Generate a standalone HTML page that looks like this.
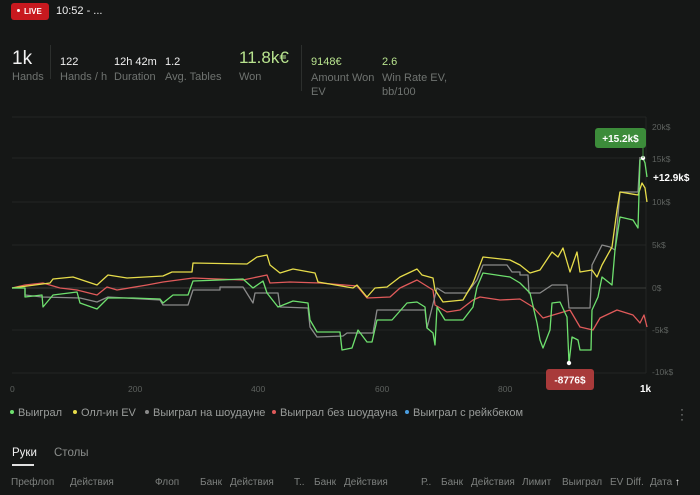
<!DOCTYPE html>
<html><head><meta charset="utf-8"><style>
*{margin:0;padding:0;box-sizing:border-box}
body{width:700px;height:495px;background:#151716;color:#e8e8e8;font-family:"Liberation Sans",sans-serif;position:relative;overflow:hidden}
.a{position:absolute;white-space:nowrap}
.v{font-size:11px;color:#f0f0f0}
.l{font-size:11px;color:#6f7370}
.g{color:#b8e38e}
.lg{font-size:11px;color:#9a9d9b}
.dot{display:inline-block;width:4px;height:4px;border-radius:50%;margin-right:4px;vertical-align:middle;position:relative;top:-1px}
.th{font-size:10px;color:#7d807e;top:477px}
</style></head><body>
<div class="a" style="left:11px;top:3px;width:38px;height:17px;background:#c8191f;border-radius:3px;font-size:8px;font-weight:bold;color:#fff;line-height:17px;padding-left:6px"><span style="display:inline-block;width:3px;height:3px;background:#fff;border-radius:50%;vertical-align:middle;margin-right:4px;position:relative;top:-1px"></span>LIVE</div>
<div class="a" style="left:56px;top:5px;font-size:11px;color:#f0f0f0">10:52 - ...</div>

<div class="a" style="left:12px;top:48px;font-size:19px;color:#f2f2f2">1k</div>
<div class="a l" style="left:12px;top:71px">Hands</div>
<div class="a" style="left:50px;top:45px;width:1px;height:34px;background:#2c2f2d"></div>
<div class="a v" style="left:60px;top:56px">122</div><div class="a l" style="left:60px;top:71px">Hands / h</div>
<div class="a v" style="left:114px;top:56px">12h 42m</div><div class="a l" style="left:114px;top:71px">Duration</div>
<div class="a v" style="left:165px;top:56px">1.2</div><div class="a l" style="left:165px;top:71px">Avg. Tables</div>
<div class="a g" style="left:239px;top:48px;font-size:17px">11.8k€</div><div class="a l" style="left:239px;top:71px">Won</div>
<div class="a" style="left:301px;top:45px;width:1px;height:46px;background:#2c2f2d"></div>
<div class="a g" style="left:311px;top:56px;font-size:11px">9148€</div><div class="a l" style="left:311px;top:71px;line-height:14px">Amount Won<br>EV</div>
<div class="a g" style="left:382px;top:56px;font-size:11px">2.6</div><div class="a l" style="left:382px;top:71px;line-height:14px">Win Rate EV,<br>bb/100</div>

<svg class="a" style="left:0;top:110px" width="700" height="290" viewBox="0 110 700 290">
<g stroke="#232624" stroke-width="1">
<line x1="12" y1="117" x2="646" y2="117"/><line x1="12" y1="158" x2="646" y2="158"/><line x1="12" y1="202" x2="646" y2="202"/><line x1="12" y1="245" x2="646" y2="245"/><line x1="12" y1="330" x2="646" y2="330"/><line x1="12" y1="373" x2="646" y2="373"/><line x1="646" y1="117" x2="646" y2="373"/>
</g>
<line x1="12" y1="288" x2="646" y2="288" stroke="#3a3d3b"/>
<g fill="none" stroke-width="1.3" stroke-linejoin="round">
<polyline stroke="#e05a5a" points="12,288 25,285 43,283 60,288 77,290 97,295 107,287 117,290 147,285 163,282 193,278 243,280 267,275 270,283 290,282 320,283 357,286 367,298 390,297 400,288 417,280 433,290 435,305 447,312 460,310 473,300 480,297 500,300 520,299 533,307 543,318 570,310 580,327 593,330 600,318 617,310 633,315 640,323 644,315 647,327"/>
<polyline stroke="#8a8a8a" points="12,288 25,288 25,295 42,297 80,298 97,302 108,297 160,300 163,305 188,305 193,290 220,290 220,287 243,287 253,303 255,293 278,293 280,307 308,308 310,327 317,337 343,336 347,333 373,333 377,310 425,310 427,328 437,288 445,293 467,293 477,280 483,265 507,265 512,272 520,272 520,275 528,275 529,293 540,293 552,285 567,285 569,308 590,308 592,265 602,245 610,247 615,250 620,192 638,192 640,157"/>
<polyline stroke="#e6dc4a" points="12,288 50,283 53,279 73,277 97,285 108,275 127,278 163,276 172,272 192,272 193,263 247,264 257,257 267,255 270,265 280,273 293,269 315,273 318,282 353,288 357,285 367,297 375,288 387,287 400,277 417,269 422,275 433,278 435,290 443,302 463,300 473,283 483,257 510,260 520,265 530,273 540,270 552,252 558,257 563,248 570,272 577,252 580,272 592,270 597,277 602,265 612,247 617,210 620,192 638,195 642,183 645,188 647,202"/>
<polyline stroke="#6ee06e" points="12,288 25,288 25,297 42,295 43,307 53,295 77,292 80,303 97,309 108,298 133,298 160,299 163,303 173,295 188,295 193,281 220,280 243,279 253,288 263,281 267,293 278,307 293,301 308,303 310,320 317,332 340,332 342,350 352,348 358,330 367,342 372,342 377,320 392,320 407,303 417,302 425,307 427,328 433,333 435,345 437,307 445,320 463,320 473,307 477,287 483,273 510,277 520,283 530,293 537,323 540,340 543,348 550,330 552,303 560,302 567,317 569,363 572,337 578,340 580,350 591,350 592,310 598,297 602,277 612,285 615,250 620,217 633,220 638,228 640,160 643,158 645,163 647,177"/>
</g>
<circle cx="643" cy="158" r="2.2" fill="#fff"/><circle cx="569" cy="363" r="2.2" fill="#fff"/>
<line x1="643" y1="148" x2="643" y2="158" stroke="#3f8f3f"/>
<rect x="595" y="128" width="51" height="20" rx="3" fill="#3c8c3a"/>
<text x="620.5" y="142" fill="#fff" font-size="10" font-weight="bold" text-anchor="middle" font-family="Liberation Sans">+15.2k$</text>
<rect x="546" y="369" width="48" height="21" rx="3" fill="#a83a3a"/>
<text x="570" y="383.5" fill="#fff" font-size="10" font-weight="bold" text-anchor="middle" font-family="Liberation Sans">-8776$</text>
<text x="653" y="181" fill="#fff" font-size="10" font-weight="bold" font-family="Liberation Sans">+12.9k$</text>
<g fill="#5d615e" font-size="8.5" font-family="Liberation Sans">
<text x="652" y="130">20k$</text><text x="652" y="162">15k$</text><text x="652" y="205">10k$</text><text x="652" y="248">5k$</text><text x="652" y="291">0$</text><text x="652" y="333">-5k$</text><text x="652" y="375">-10k$</text>
<text x="10" y="392">0</text><text x="128" y="392">200</text><text x="251" y="392">400</text><text x="375" y="392">600</text><text x="498" y="392">800</text>
</g>
<text x="640" y="392" fill="#fff" font-size="10" font-weight="bold" font-family="Liberation Sans">1k</text>
</svg>

<div class="a lg" style="left:10px;top:407px"><span class="dot" style="background:#6ee06e"></span>Выиграл</div>
<div class="a lg" style="left:73px;top:407px"><span class="dot" style="background:#e6dc4a"></span>Олл-ин EV</div>
<div class="a lg" style="left:145px;top:407px"><span class="dot" style="background:#8a8a8a"></span>Выиграл на шоудауне</div>
<div class="a lg" style="left:272px;top:407px"><span class="dot" style="background:#e05a5a"></span>Выиграл без шоудауна</div>
<div class="a lg" style="left:405px;top:407px"><span class="dot" style="background:#4a9ee0"></span>Выиграл с рейкбеком</div>
<div class="a" style="left:680px;top:407px;font-size:12px;color:#9a9d9b;line-height:5px">·<br>·<br>·</div>

<div class="a" style="left:12px;top:447px;font-size:11.5px;color:#f0f0f0">Руки</div>
<div class="a" style="left:12px;top:464px;width:22px;height:2px;background:#e0e0e0"></div>
<div class="a" style="left:54px;top:447px;font-size:11.5px;color:#8a8d8b">Столы</div>

<div class="a th" style="left:11px">Префлоп</div>
<div class="a th" style="left:70px">Действия</div>
<div class="a th" style="left:155px">Флоп</div>
<div class="a th" style="left:200px">Банк</div>
<div class="a th" style="left:230px">Действия</div>
<div class="a th" style="left:294px">Т..</div>
<div class="a th" style="left:314px">Банк</div>
<div class="a th" style="left:344px">Действия</div>
<div class="a th" style="left:421px">Р..</div>
<div class="a th" style="left:441px">Банк</div>
<div class="a th" style="left:471px">Действия</div>
<div class="a th" style="left:522px">Лимит</div>
<div class="a th" style="left:562px">Выиграл</div>
<div class="a th" style="left:610px">EV Diff.</div>
<div class="a th" style="left:650px">Дата <span style="color:#fff">↑</span></div>
</body></html>
